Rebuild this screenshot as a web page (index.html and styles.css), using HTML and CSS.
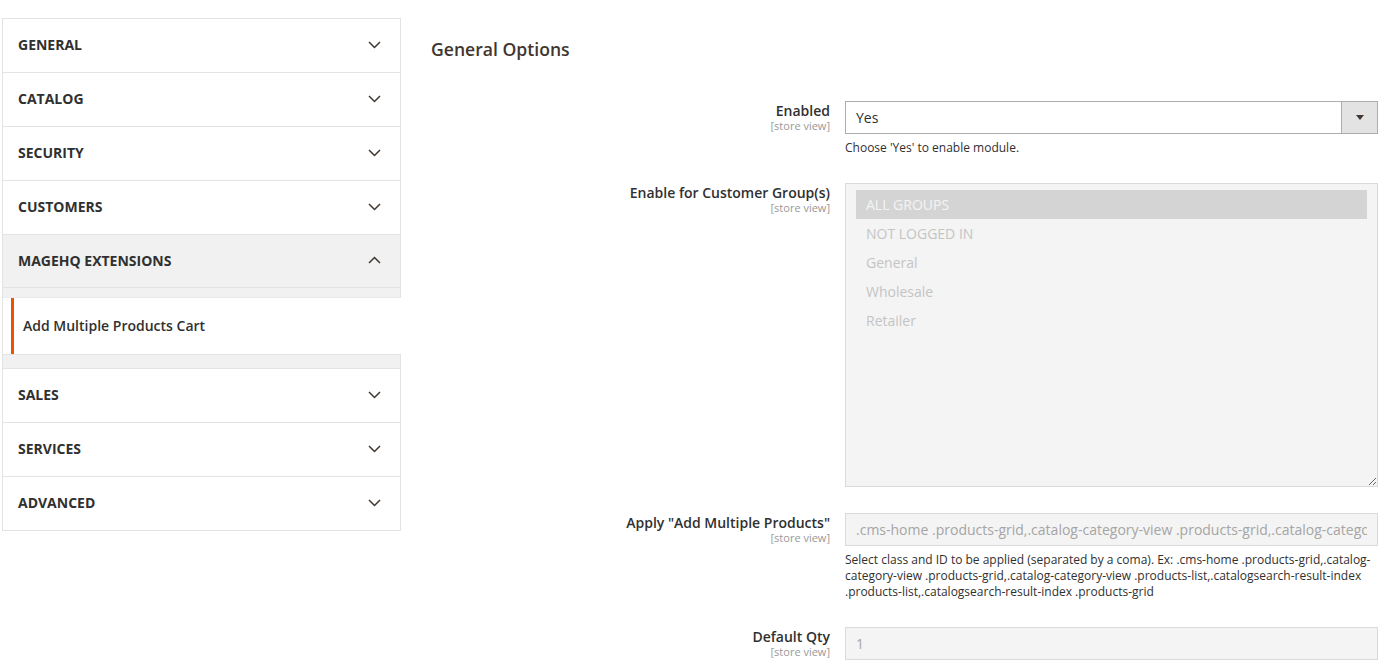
FILE: index.html
```html
<!DOCTYPE html>
<html lang="en">
<head>
    <meta charset="UTF-8">
    <title>Configuration - Add Multiple Products Cart</title>
    <link rel="stylesheet" href="styles.css">
</head>
<body>
    <div class="page">
        <ul class="config-nav">
            <li class="nav-group">
                <span>General</span>
                <svg class="chevron" width="13" height="8" viewBox="0 0 13 8"><polyline points="1,1 6.5,6.5 12,1"/></svg>
            </li>
            <li class="nav-group">
                <span>Catalog</span>
                <svg class="chevron" width="13" height="8" viewBox="0 0 13 8"><polyline points="1,1 6.5,6.5 12,1"/></svg>
            </li>
            <li class="nav-group">
                <span>Security</span>
                <svg class="chevron" width="13" height="8" viewBox="0 0 13 8"><polyline points="1,1 6.5,6.5 12,1"/></svg>
            </li>
            <li class="nav-group">
                <span>Customers</span>
                <svg class="chevron" width="13" height="8" viewBox="0 0 13 8"><polyline points="1,1 6.5,6.5 12,1"/></svg>
            </li>
            <li class="nav-group open">
                <span>MageHQ Extensions</span>
                <svg class="chevron" width="13" height="8" viewBox="0 0 13 8"><polyline points="1,7 6.5,1.5 12,7"/></svg>
            </li>
            <li class="nav-sub">
                <a class="nav-sub-item active" href="#">Add Multiple Products Cart</a>
            </li>
            <li class="nav-group">
                <span>Sales</span>
                <svg class="chevron" width="13" height="8" viewBox="0 0 13 8"><polyline points="1,1 6.5,6.5 12,1"/></svg>
            </li>
            <li class="nav-group">
                <span>Services</span>
                <svg class="chevron" width="13" height="8" viewBox="0 0 13 8"><polyline points="1,1 6.5,6.5 12,1"/></svg>
            </li>
            <li class="nav-group">
                <span>Advanced</span>
                <svg class="chevron" width="13" height="8" viewBox="0 0 13 8"><polyline points="1,1 6.5,6.5 12,1"/></svg>
            </li>
        </ul>

        <div class="main">
            <h2 class="section-title">General Options</h2>

            <div class="field">
                <div class="field-label">
                    Enabled
                    <span class="scope">[store view]</span>
                </div>
                <div class="field-control">
                    <div class="select">
                        <span>Yes</span>
                        <span class="select-arrow"></span>
                    </div>
                    <p class="note">Choose 'Yes' to enable module.</p>
                </div>
            </div>

            <div class="field field-tall">
                <div class="field-label">
                    Enable for Customer Group(s)
                    <span class="scope">[store view]</span>
                </div>
                <div class="field-control">
                    <div class="multiselect">
                        <div class="option selected">ALL GROUPS</div>
                        <div class="option">NOT LOGGED IN</div>
                        <div class="option">General</div>
                        <div class="option">Wholesale</div>
                        <div class="option">Retailer</div>
                    </div>
                </div>
            </div>

            <div class="field">
                <div class="field-label">
                    Apply "Add Multiple Products"
                    <span class="scope">[store view]</span>
                </div>
                <div class="field-control">
                    <input class="text-input" type="text" disabled value=".cms-home .products-grid,.catalog-category-view .products-grid,.catalog-category-view .products-list,.catalogsearch-result-index .products-list,.catalogsearch-result-index .products-grid">
                    <p class="note">Select class and ID to be applied (separated by a coma). Ex: .cms-home .products-grid,.catalog-category-view .products-grid,.catalog-category-view .products-list,.catalogsearch-result-index .products-list,.catalogsearch-result-index .products-grid</p>
                </div>
            </div>

            <div class="field">
                <div class="field-label">
                    Default Qty
                    <span class="scope">[store view]</span>
                </div>
                <div class="field-control">
                    <input class="text-input" type="text" disabled value="1">
                </div>
            </div>
        </div>
    </div>
</body>
</html>
```

FILE: styles.css
```css
body {
    margin: 0;
    font-family: "Open Sans", "Liberation Sans", sans-serif;
    color: #303030;
    background: #fff;
}
.page {
    display: flex;
    align-items: flex-start;
    padding: 18px 13px 0 2px;
    gap: 30px;
}

/* left config navigation */
.config-nav {
    list-style: none;
    margin: 0;
    padding: 0;
    width: 397px;
    flex-shrink: 0;
    border: 1px solid #e3e3e3;
    border-bottom: none;
}
.nav-group {
    display: flex;
    justify-content: space-between;
    align-items: center;
    height: 51px;
    padding: 0 19px 2px 15px;
    border-bottom: 1px solid #e3e3e3;
    font-size: 14px;
    font-weight: 700;
    text-transform: uppercase;
    color: #303030;
}
.nav-group.open {
    background: #f1f1f1;
    height: 50px;
}
.chevron {
    fill: none;
    stroke: #41362f;
    stroke-width: 1.5;
}
.nav-sub {
    background: #f1f1f1;
    padding: 9px 0 13px;
    border-bottom: 1px solid #e3e3e3;
}
.nav-sub-item {
    display: block;
    margin-right: -1px;
    background: #fff;
    border-top: 1px solid #ebebeb;
    border-bottom: 1px solid #e3e3e3;
    padding: 0 0 0 8px;
    text-decoration: none;
}
.nav-sub-item.active {
    box-shadow: inset 8px 0 0 #fff, inset 11px 0 0 #eb5202;
    padding-left: 20px;
    line-height: 56px;
    font-size: 14px;
    font-weight: 600;
    color: #303030;
}

/* main form */
.main {
    flex: 1;
}
.section-title {
    margin: 19px 0 40px;
    font-size: 17.6px;
    line-height: 24px;
    font-weight: 600;
    color: #41362f;
}
.field {
    display: grid;
    grid-template-columns: 399px 1fr;
    column-gap: 15px;
    margin-bottom: 28px;
}
.field-tall {
    margin-bottom: 26px;
}
.field-label {
    text-align: right;
    font-size: 14px;
    line-height: 19px;
    font-weight: 600;
    color: #303030;
}
.scope {
    display: block;
    font-size: 11px;
    line-height: 12px;
    font-weight: 400;
    color: #999;
}
.select {
    display: flex;
    align-items: center;
    justify-content: space-between;
    height: 31px;
    border: 1px solid #adadad;
    padding-left: 10px;
    font-size: 14px;
    color: #303030;
    background: #fff;
}
.select-arrow {
    align-self: stretch;
    width: 35px;
    border-left: 1px solid #adadad;
    background: #e3e3e3;
    display: flex;
    align-items: center;
    justify-content: center;
}
.select-arrow::after {
    content: "";
    border-left: 4px solid transparent;
    border-right: 4px solid transparent;
    border-top: 5px solid #41362f;
}
.note {
    margin: 6px 0 -1px;
    font-size: 12px;
    line-height: 16px;
    color: #303030;
}
.multiselect {
    box-sizing: border-box;
    height: 304px;
    border: 1px solid #dadada;
    background: #f4f4f4;
    padding: 6px 10px;
    resize: vertical;
    overflow: auto;
}
.option {
    height: 29px;
    line-height: 29px;
    padding-left: 10px;
    font-size: 14px;
    color: #c4c4c4;
}
.option.selected {
    background: #d4d4d4;
    color: #f4f4f4;
}
.text-input {
    box-sizing: border-box;
    display: block;
    width: 100%;
    height: 33px;
    margin: 0;
    padding: 0 10px;
    border: 1px solid #dadada;
    background: #f4f4f4;
    font-family: inherit;
    font-size: 14px;
    color: #a5a5a5;
    -webkit-text-fill-color: #a5a5a5;
    opacity: 1;
}
```
